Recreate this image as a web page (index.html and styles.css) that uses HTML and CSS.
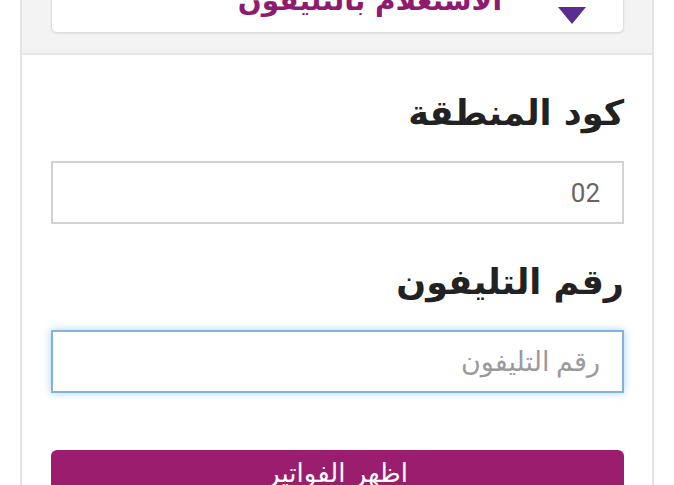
FILE: index.html
```html
<!DOCTYPE html>
<html lang="ar" dir="rtl">
<head>
<meta charset="utf-8">
<link rel="stylesheet" href="styles.css">
</head>
<body>
<div class="panel">
  <div class="top">
    <div class="select">
      <span class="caret"></span>
      <span class="select-text">الاستعلام بالتليفون</span>
    </div>
  </div>
  <form class="form">
    <div class="field">
      <label class="label">كود المنطقة</label>
      <input class="input" type="text" value="02">
    </div>
    <div class="field">
      <label class="label">رقم التليفون</label>
      <input class="input focus" type="text" placeholder="رقم التليفون">
    </div>
    <button class="btn" type="button">اظهر الفواتير</button>
  </form>
</div>
</body>
</html>
```
FILE: styles.css
```css
html, body {
  margin: 0;
  padding: 0;
  background: #ffffff;
  overflow: hidden;
  height: 485px;
}
body {
  font-family: "DejaVu Sans", sans-serif;
}
.panel {
  margin: 0 20px;
  border-left: 2px solid #e3e3e3;
  border-right: 2px solid #e3e3e3;
  min-height: 600px;
}
.top {
  background: #f3f3f3;
  padding: 0 28px 20px 29px;
  border-bottom: 2px solid #e6e6e6;
}
.select {
  margin-top: -27px;
  height: 58px;
  background: #fff;
  border: 1px solid #dddddd;
  border-radius: 6px;
  box-shadow: 0 1px 2px rgba(0,0,0,0.08);
  display: flex;
  align-items: center;
  padding-right: 37px;
}
.caret {
  width: 0;
  height: 0;
  border-left: 14px solid transparent;
  border-right: 14px solid transparent;
  border-top: 17px solid #5b2d90;
  margin-top: 24px;
}
.select-text {
  margin-right: 56px;
  color: #8e1b6f;
  font-weight: bold;
  font-size: 28px;
  margin-top: -6px;
}
.form {
  padding: 0 28px 0 29px;
  display: flex;
  flex-direction: column;
}
.field {
  display: flex;
  flex-direction: column;
}
.label {
  font-size: 35px;
  font-weight: bold;
  color: #222;
  line-height: 40px;
  margin-top: 38px;
  margin-bottom: 28px;
}
.input {
  height: 63px;
  box-sizing: border-box;
  border: 2px solid #d2d2d2;
  background: #fff;
  font-family: Roboto, "DejaVu Sans", sans-serif;
  font-size: 26px;
  color: #666;
  padding: 0 22px;
  direction: rtl;
  outline: none;
  margin: 0;
}
.input::placeholder {
  color: #9a9a9a;
  font-size: 27px;
}
.input.focus {
  border-color: #80b4dc;
  box-shadow: 0 0 8px rgba(102, 175, 233, 0.55);
}
.btn {
  margin-top: 57px;
  height: 60px;
  border: none;
  border-radius: 6px;
  background: #9b1d6d;
  color: #fff;
  font-family: "DejaVu Sans", sans-serif;
  font-size: 26px;
  padding: 0;
  display: flex;
  align-items: flex-start;
  justify-content: center;
  padding-top: 8px;
}
```
